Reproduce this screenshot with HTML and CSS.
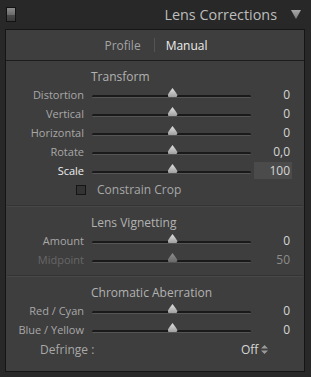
FILE: index.html
```html
<!DOCTYPE html>
<html lang="en">
<head>
    <meta charset="UTF-8">
    <title>Lens Corrections</title>
    <link rel="stylesheet" href="styles.css">
</head>
<body>
    <div class="header">
        <span class="switch"></span>
        <span class="title">Lens Corrections</span>
        <svg class="collapse" width="10" height="10" viewBox="0 0 10 10">
            <defs>
                <linearGradient id="tri" x1="0" y1="0" x2="0" y2="1">
                    <stop offset="0" stop-color="#a8a8a8"/>
                    <stop offset="1" stop-color="#7a7a7a"/>
                </linearGradient>
            </defs>
            <path d="M0 0 L10 0 L5 9 Z" fill="url(#tri)"/>
        </svg>
    </div>

    <div class="panel">
        <div class="tabs">
            <span class="tab">Profile</span>
            <span class="tab-sep"></span>
            <span class="tab active">Manual</span>
        </div>

        <div class="section">
            <div class="heading">Transform</div>
            <div class="row">
                <span class="label">Distortion</span>
                <div class="track"><span class="thumb" style="left: 50%"></span></div>
                <span class="value">0</span>
            </div>
            <div class="row">
                <span class="label">Vertical</span>
                <div class="track"><span class="thumb" style="left: 50%"></span></div>
                <span class="value">0</span>
            </div>
            <div class="row">
                <span class="label">Horizontal</span>
                <div class="track"><span class="thumb" style="left: 50%"></span></div>
                <span class="value">0</span>
            </div>
            <div class="row">
                <span class="label">Rotate</span>
                <div class="track"><span class="thumb" style="left: 50%"></span></div>
                <span class="value">0,0</span>
            </div>
            <div class="row">
                <span class="label bright">Scale</span>
                <div class="track"><span class="thumb" style="left: 50%"></span></div>
                <span class="value"><span class="value-box">100</span></span>
            </div>
            <div class="check-row">
                <span class="checkbox"></span>
                <span class="check-label">Constrain Crop</span>
            </div>
        </div>

        <div class="divider"></div>

        <div class="section">
            <div class="heading">Lens Vignetting</div>
            <div class="row">
                <span class="label">Amount</span>
                <div class="track"><span class="thumb" style="left: 50%"></span></div>
                <span class="value">0</span>
            </div>
            <div class="row dim">
                <span class="label">Midpoint</span>
                <div class="track"><span class="thumb" style="left: 50%"></span></div>
                <span class="value">50</span>
            </div>
        </div>

        <div class="divider"></div>

        <div class="section">
            <div class="heading">Chromatic Aberration</div>
            <div class="row">
                <span class="label">Red / Cyan</span>
                <div class="track"><span class="thumb" style="left: 50%"></span></div>
                <span class="value">0</span>
            </div>
            <div class="row">
                <span class="label">Blue / Yellow</span>
                <div class="track"><span class="thumb" style="left: 50%"></span></div>
                <span class="value">0</span>
            </div>
            <div class="defringe">
                <span class="defringe-label">Defringe :</span>
                <span class="popup">Off
                    <svg width="7" height="9" viewBox="0 0 7 9">
                        <path d="M0 3.5 L3.5 0 L7 3.5 Z M0 5.5 L3.5 9 L7 5.5 Z" fill="#9a9a9a"/>
                    </svg>
                </span>
            </div>
        </div>
    </div>
</body>
</html>
```

FILE: styles.css
```css
body {
    margin: 0;
    width: 311px;
    height: 377px;
    background-color: #282828;
    font-family: "Open Sans", "DejaVu Sans", sans-serif;
    font-size: 11px;
    color: #a8a8a8;
    overflow: hidden;
}

/* Panel header */
.header {
    height: 29px;
    display: flex;
    align-items: center;
    padding: 0 10px 0 6px;
    box-sizing: border-box;
}

.switch {
    width: 8px;
    height: 13px;
    margin-top: -1px;
    border: 1px solid #121212;
    background: linear-gradient(#8c8c8c 0, #6c6c6c 50%, #4a4a4a 51%, #3a3a3a 100%);
}

.title {
    margin-left: auto;
    margin-right: 14px;
    font-size: 14.4px;
    color: #bdbdbd;
}

.collapse {
    display: block;
}

/* Panel body */
.panel {
    margin-left: 5px;
    width: 298px;
    height: 341px;
    border: 1px solid #151515;
    background-color: #3e3e3e;
}

.tabs {
    height: 30px;
    display: flex;
    justify-content: center;
    align-items: center;
    padding-left: 2px;
    border-bottom: 1px solid #1c1c1c;
    font-size: 12px;
}

.tab {
    color: #a4a4a4;
}

.tab.active {
    color: #ececec;
}

.tab-sep {
    width: 1px;
    height: 14px;
    margin: 0 11px 0 13px;
    background-color: #545454;
}

.section {
    padding-bottom: 6px;
}

.heading {
    padding: 8px 0 0 85px;
    height: 16px;
    line-height: 16px;
    font-size: 12px;
    color: #b2b2b2;
}

.divider {
    border-top: 1px solid #333333;
    border-bottom: 1px solid #474747;
    margin: 0 1px;
}

.row {
    display: grid;
    grid-template-columns: 86px 159px 1fr;
    height: 19px;
    align-items: center;
    padding-right: 14px;
}

.label {
    text-align: right;
    padding-right: 8px;
}

.label.bright {
    color: #ededed;
}

.track {
    position: relative;
    height: 3px;
    margin-top: 4px;
    box-sizing: border-box;
    border-top: 2px solid #1a1a1a;
    border-bottom: 1px solid #555555;
    border-radius: 2px;
}

.thumb {
    position: absolute;
    top: -9px;
    width: 10px;
    height: 9px;
    margin-left: -4px;
    background: linear-gradient(#e0e0e0, #a0a0a0);
    clip-path: polygon(50% 0, 80% 45%, 100% 80%, 90% 100%, 10% 100%, 0 80%, 20% 45%);
}

.value {
    text-align: right;
    color: #d6d6d6;
    font-size: 12px;
}

.value-box {
    display: inline-block;
    width: 38px;
    height: 17px;
    line-height: 17px;
    margin-right: -2px;
    padding-right: 2px;
    box-sizing: border-box;
    background-color: #4b4b4b;
}

.row.dim .label {
    color: #676767;
}

.row.dim .value {
    color: #8c8c8c;
}

.row.dim .thumb {
    background: linear-gradient(#8e8e8e, #6a6a6a);
}

.check-row {
    display: flex;
    align-items: center;
    height: 19px;
    padding-left: 70px;
}

.checkbox {
    width: 8px;
    height: 8px;
    border: 1px solid #151515;
    background-color: #333333;
}

.check-label {
    margin-left: 11px;
    font-size: 12px;
}

.defringe {
    display: flex;
    align-items: center;
    height: 21px;
    padding-left: 34px;
    font-size: 12px;
}

.defringe-label {
    width: 201px;
}

.popup {
    display: flex;
    align-items: center;
    gap: 3px;
    color: #d6d6d6;
}
```
